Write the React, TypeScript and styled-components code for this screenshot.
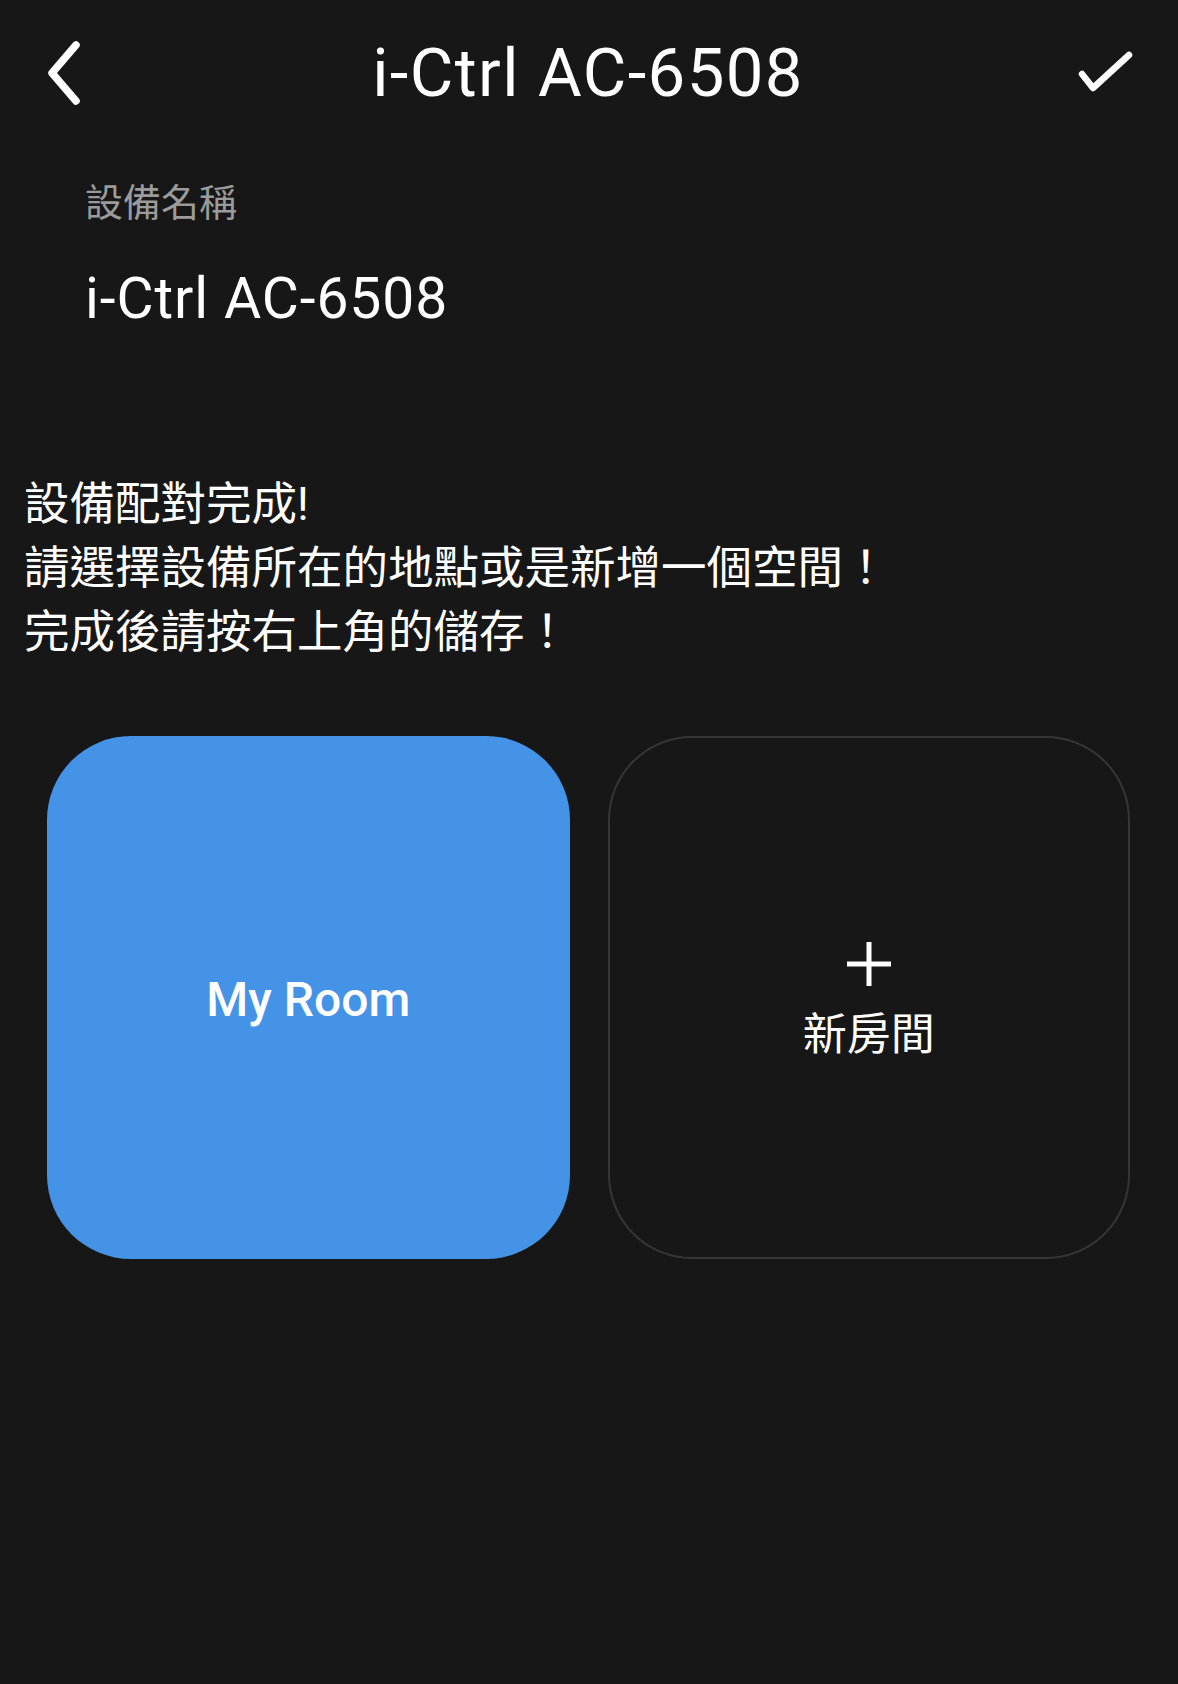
import React from "react";
import styled, { createGlobalStyle } from "styled-components";

const GlobalStyle = createGlobalStyle`
  html, body {
    margin: 0;
    padding: 0;
    background: #171717;
  }
  body {
    font-family: Roboto, "Noto Sans CJK TC", "Noto Sans", sans-serif;
    color: #ffffff;
  }
`;

const Screen = styled.div`
  width: 1178px;
  min-height: 1684px;
  background: #171717;
  display: flex;
  flex-direction: column;
`;

const Header = styled.header`
  height: 146px;
  display: grid;
  grid-template-columns: 1fr auto 1fr;
  align-items: center;
  padding: 0 44px 0 42px;
`;

const IconButton = styled.button<{ $align: "start" | "end" }>`
  justify-self: ${(p) => p.$align};
  background: none;
  border: none;
  padding: 0;
  display: flex;
  align-items: center;
  color: #ffffff;
  cursor: pointer;
`;

const Title = styled.h1`
  margin: 0;
  font-family: Roboto, "Noto Sans CJK TC", sans-serif;
  font-weight: 400;
  font-size: 67px;
  line-height: 1;
  letter-spacing: 1.4px;
  color: #ffffff;
`;

const NameSection = styled.section`
  padding: 34px 0 0 85px;
  display: flex;
  flex-direction: column;
  gap: 44px;
`;

const FieldLabel = styled.div`
  font-size: 38px;
  line-height: 46px;
  color: #9b9b9b;
`;

const FieldValue = styled.div`
  font-size: 57px;
  line-height: 57px;
  color: #ffffff;
  letter-spacing: 0.9px;
`;

const Message = styled.p`
  margin: 146px 0 0 0;
  padding: 0 24px;
  font-size: 45.5px;
  line-height: 64px;
  color: #ffffff;
`;

const RoomGrid = styled.div`
  margin-top: 71px;
  padding: 0 48px 0 47px;
  display: grid;
  grid-template-columns: 1fr 1fr;
  gap: 38px;
`;

const RoomCard = styled.div<{ $selected?: boolean }>`
  aspect-ratio: 1 / 1;
  box-sizing: border-box;
  border-radius: 84px;
  display: flex;
  flex-direction: column;
  align-items: center;
  justify-content: center;
  gap: 24px;
  padding-top: 6px;
  background: ${(p) => (p.$selected ? "#4593e6" : "#171717")};
  border: ${(p) => (p.$selected ? "none" : "2px solid #363636")};
`;

const RoomName = styled.div`
  font-size: 48px;
  font-weight: 500;
  line-height: 1;
  color: #ffffff;
`;

const AddLabel = styled.div`
  font-size: 44px;
  line-height: 48px;
  color: #ffffff;
`;

const BackIcon = () => (
  <svg width="40" height="64" viewBox="0 0 40 64" fill="none">
    <polyline
      points="34,4 10,32 34,60"
      stroke="#fff"
      strokeWidth="7.5"
      strokeLinecap="round"
      strokeLinejoin="round"
    />
  </svg>
);

const CheckIcon = () => (
  <svg width="56" height="44" viewBox="0 0 56 44" fill="none">
    <polyline
      points="4,23 15,37 51,4"
      stroke="#fff"
      strokeWidth="6.5"
      strokeLinecap="round"
      strokeLinejoin="round"
    />
  </svg>
);

const PlusIcon = () => (
  <svg width="46" height="46" viewBox="0 0 46 46" fill="none">
    <line x1="23" y1="1" x2="23" y2="45" stroke="#fff" strokeWidth="5" />
    <line x1="1" y1="23" x2="45" y2="23" stroke="#fff" strokeWidth="5" />
  </svg>
);

export default function App() {
  return (
    <>
      <GlobalStyle />
      <Screen>
        <Header>
          <IconButton $align="start" aria-label="back">
            <BackIcon />
          </IconButton>
          <Title>i-Ctrl AC-6508</Title>
          <IconButton $align="end" aria-label="save">
            <CheckIcon />
          </IconButton>
        </Header>

        <NameSection>
          <FieldLabel>設備名稱</FieldLabel>
          <FieldValue>i-Ctrl AC-6508</FieldValue>
        </NameSection>

        <Message>
          設備配對完成!
          <br />
          請選擇設備所在的地點或是新增一個空間！
          <br />
          完成後請按右上角的儲存！
        </Message>

        <RoomGrid>
          <RoomCard $selected>
            <RoomName>My Room</RoomName>
          </RoomCard>
          <RoomCard>
            <PlusIcon />
            <AddLabel>新房間</AddLabel>
          </RoomCard>
        </RoomGrid>
      </Screen>
    </>
  );
}
